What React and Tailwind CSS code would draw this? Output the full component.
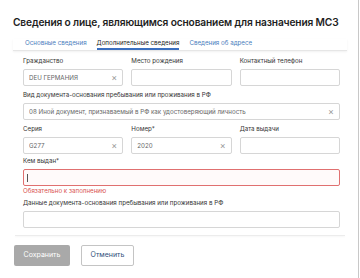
import React from 'react';

const Field = ({ label, value, clear, className = '' }) => (
  <div className={className}>
    <div className="text-[6.2px] leading-[8px] text-[#333] mb-[4px] whitespace-nowrap">{label}</div>
    <div className="h-[17px] border border-[#d6d6d6] rounded-[2px] bg-white flex items-center px-[5px] text-[6.2px] text-[#666]">
      <span className="flex-1 whitespace-nowrap overflow-hidden">{value}</span>
      {clear && <span className="text-[#999] text-[9px] leading-none">×</span>}
    </div>
  </div>
);

const App = () => {
  return (
    <div className="w-[360px] h-[278px] bg-white relative overflow-hidden font-['Inter',sans-serif]">
      <div className="absolute right-[1px] top-0 bottom-0 w-px bg-[#c8c8c8]" />
      <div className="flex items-center pl-[13px] pr-[18px] pt-[15px]">
        <h1 className="text-[10.2px] tracking-[-0.15px] font-semibold text-[#1e1e1e] whitespace-nowrap leading-[14px]">
          Сведения о лице, являющимся основанием для назначения МСЗ
        </h1>
        <svg width="8" height="8" viewBox="0 0 10 10" className="ml-[5px]">
          <path d="M1 1L9 9M9 1L1 9" stroke="#3a78c9" strokeWidth="1.3" />
        </svg>
      </div>

      <div className="mx-[13px] mt-[10px] border-b border-[#e6e6e6] shadow-[0_1px_2px_rgba(0,0,0,0.06)]">
        <div className="flex gap-[10px] pl-[12px] text-[6.2px] leading-[8px]">
          <div className="pb-[3px] text-[#4a7dbd]">Основные сведения</div>
          <div className="pb-[1px] text-[#222] border-b-2 border-[#3a6fc0]">Дополнительные сведения</div>
          <div className="pb-[3px] text-[#4a7dbd]">Сведения об адресе</div>
        </div>
      </div>

      <div className="pl-[23px] pr-[20px] pt-[6px]">
        <div className="grid grid-cols-3 gap-x-[8px]">
          <Field label="Гражданство" value="DEU ГЕРМАНИЯ" clear />
          <Field label="Место рождения" value="" />
          <Field label="Контактный телефон" value="" />
        </div>
        <Field
          className="mt-[5px]"
          label="Вид документа-основания пребывания или проживания в РФ"
          value="08 Иной документ, признаваемый в РФ как удостоверяющий личность"
          clear
        />
        <div className="grid grid-cols-3 gap-x-[8px] mt-[5px]">
          <Field label="Серия" value="G277" clear />
          <Field label="Номер*" value="2020" clear />
          <Field label="Дата выдачи" value="" />
        </div>
        <div className="mt-[3px]">
          <div className="text-[6.2px] leading-[8px] text-[#333] mb-[4px]">Кем выдан*</div>
          <div className="h-[17px] border border-[#e07070] rounded-[2px] bg-[#fffafa] flex items-center px-[3px]">
            <div className="w-px h-[8px] bg-[#555]" />
          </div>
          <div className="text-[6.2px] leading-[8px] text-[#d9534f] mt-[1px]">Обязательно к заполнению</div>
        </div>
        <Field
          className="mt-[4px]"
          label="Данные документа-основания пребывания или проживания в РФ"
          value=""
        />
      </div>

      <div className="mx-[15px] mt-[7px] border-b border-[#ececec] shadow-[0_1px_2px_rgba(0,0,0,0.05)]" />

      <div className="flex gap-[11px] pl-[14px] mt-[9px]">
        <button className="w-[56px] h-[21px] rounded-[2px] bg-[#a9a9a9] text-white text-[7px]">Сохранить</button>
        <button className="w-[53px] h-[21px] rounded-[2px] border border-[#c4c4c4] bg-white text-[#2f4f7a] text-[7px]">Отменить</button>
      </div>
    </div>
  );
};

export default App;
